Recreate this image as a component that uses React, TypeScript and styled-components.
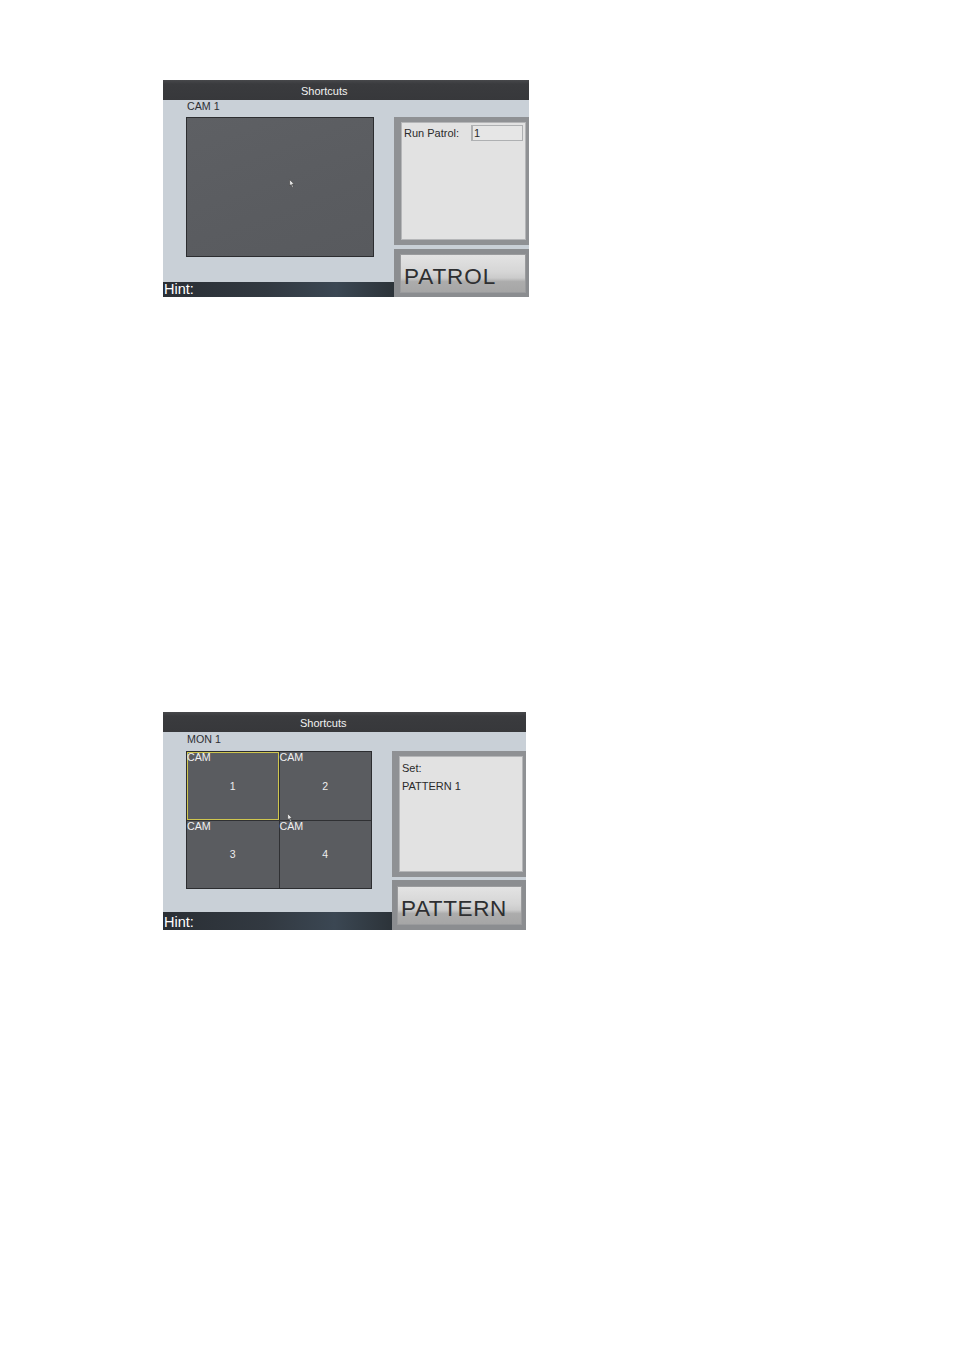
import React from 'react'
import styled, { createGlobalStyle } from 'styled-components'

const GlobalStyle = createGlobalStyle`
  html, body {
    margin: 0;
    padding: 0;
    background: #ffffff;
  }
  body {
    font-family: "Liberation Sans", Arial, sans-serif;
  }
`

const Page = styled.div`
  width: 954px;
  height: 1349px;
  padding-top: 80px;
  box-sizing: border-box;
  display: flex;
  flex-direction: column;
  gap: 415px;
`

const Screen = styled.div<{ $left: number; $width: number; $height: number }>`
  margin-left: 163px;
  width: ${({ $width }) => $width}px;
  height: ${({ $height }) => $height}px;
  display: grid;
  grid-template-columns: ${({ $left }) => $left}px 1fr;
  grid-template-rows: 20px 1fr;
  background: #c9d0d7;
  overflow: hidden;
`

const Header = styled.div<{ $pad: number }>`
  grid-column: 1 / 3;
  background: linear-gradient(#47484b 0%, #3a3b3e 20%, #37383b 100%);
  color: #f2f2f2;
  font-size: 11px;
  line-height: 22px;
  padding-left: ${({ $pad }) => $pad}px;
`

const LeftCol = styled.div`
  display: flex;
  flex-direction: column;
  min-height: 0;
`

const Label = styled.div<{ $h: number }>`
  height: ${({ $h }) => $h}px;
  padding-left: 24px;
  font-size: 10.7px;
  line-height: ${({ $h }) => $h - 4}px;
  color: #2d2f33;
`

const Viewport = styled.div<{ $h: number; $w: number }>`
  position: relative;
  margin-left: 23px;
  width: ${({ $w }) => $w}px;
  height: ${({ $h }) => $h}px;
  box-sizing: border-box;
  border: 1px solid #2c2d30;
  background: linear-gradient(160deg, #5e6064 0%, #5a5c60 60%, #585a5e 100%);
`

const QuadGrid = styled.div<{ $h: number; $w: number }>`
  position: relative;
  margin-left: 23px;
  width: ${({ $w }) => $w}px;
  height: ${({ $h }) => $h}px;
  box-sizing: border-box;
  border: 1px solid #2c2d30;
  background: #2f3033;
  display: grid;
  grid-template-columns: 1fr 1fr;
  grid-template-rows: 1fr 1fr;
  gap: 1px;
`

const Cell = styled.div<{ $active?: boolean }>`
  position: relative;
  background: #5a5c60;
  box-shadow: ${({ $active }) => ($active ? 'inset 0 0 0 1px #cfc64e' : 'none')};
  display: flex;
  align-items: center;
  justify-content: center;
  color: #eeeeee;
  font-size: 10.5px;
`

const CellTag = styled.span`
  position: absolute;
  left: 0;
  top: -1px;
  font-size: 10.7px;
  color: #f0f0f0;
`

const Cursor = styled.svg<{ $x: number; $y: number }>`
  position: absolute;
  left: ${({ $x }) => $x}px;
  top: ${({ $y }) => $y}px;
  width: 6px;
  height: 9px;
`

const Hint = styled.div<{ $h: number }>`
  margin-top: auto;
  height: ${({ $h }) => $h}px;
  box-sizing: border-box;
  padding: ${({ $h }) => $h - 15}px 0 0 1px;
  background: linear-gradient(90deg, #2a2f35 0%, #323941 45%, #3b4753 75%, #2c3339 100%);
  color: #ffffff;
  font-size: 14.5px;
  line-height: 15px;
`

const RightCol = styled.div<{ $top: number; $gap: number }>`
  display: flex;
  flex-direction: column;
  padding-top: ${({ $top }) => $top}px;
  gap: ${({ $gap }) => $gap}px;
  min-height: 0;
`

const PanelFrame = styled.div<{ $h: number }>`
  flex-shrink: 0;
  height: ${({ $h }) => $h}px;
  box-sizing: border-box;
  padding: 5px 3px 5px 7px;
  background: #8f9194;
  display: flex;
`

const PanelInner = styled.div`
  flex: 1;
  box-sizing: border-box;
  background: #e2e2e2;
  border: 1px solid #b5b6b8;
  padding: 2px 2px;
  font-size: 11px;
  color: #2a2a2a;
`

const FieldRow = styled.div`
  display: flex;
  align-items: center;
  gap: 12px;
`

const FieldInput = styled.div`
  width: 52px;
  height: 16px;
  box-sizing: border-box;
  border: 1px solid #aeb0b2;
  border-left-width: 2px;
  background: #e6e6e6;
  font-size: 11px;
  line-height: 15px;
  padding-left: 1px;
`

const TextLine = styled.div`
  line-height: 18px;
`

const ButtonFrame = styled.div<{ $pad: string }>`
  flex: 1;
  min-height: 0;
  box-sizing: border-box;
  padding: ${({ $pad }) => $pad};
  background: #8b8d90;
  display: flex;
`

const BigButton = styled.div<{ $spacing: number }>`
  flex: 1;
  min-height: 0;
  box-sizing: border-box;
  border: 1px solid #9a9b9d;
  background: linear-gradient(#e3e3e3 0%, #d6d6d6 45%, #cbcbcb 62%, #acacac 72%, #a6a6a6 100%);
  color: #2e2f31;
  font-size: 22.5px;
  letter-spacing: ${({ $spacing }) => $spacing}px;
  line-height: 30px;
  padding: 7px 0 0 3px;
  overflow: hidden;
  white-space: nowrap;
`

const Arrow: React.FC<{ x: number; y: number }> = ({ x, y }) => (
  <Cursor $x={x} $y={y} viewBox="0 0 6 9">
    <path d="M0.6 0.6 L0.6 7 L2 5.6 L3.3 8.4 L4.4 7.9 L3.1 5.2 L5.2 5.1 Z" fill="#e6e6e6" stroke="#3a3a3a" strokeWidth="0.6" />
  </Cursor>
)

const cams = [1, 2, 3, 4]

export default function App() {
  return (
    <>
      <GlobalStyle />
      <Page>
        <Screen $left={231} $width={366} $height={217}>
          <Header $pad={138}>Shortcuts</Header>
          <LeftCol>
            <Label $h={17}>CAM 1</Label>
            <Viewport $w={188} $h={140}>
              <Arrow x={102} y={61} />
            </Viewport>
            <Hint $h={15}>Hint:</Hint>
          </LeftCol>
          <RightCol $top={17} $gap={4}>
            <PanelFrame $h={128}>
              <PanelInner>
                <FieldRow>
                  <span>Run Patrol:</span>
                  <FieldInput>1</FieldInput>
                </FieldRow>
              </PanelInner>
            </PanelFrame>
            <ButtonFrame $pad="5px 3px 4px 6px">
              <BigButton $spacing={0.9}>PATROL</BigButton>
            </ButtonFrame>
          </RightCol>
        </Screen>

        <Screen $left={229} $width={363} $height={218}>
          <Header $pad={137}>Shortcuts</Header>
          <LeftCol>
            <Label $h={19}>MON 1</Label>
            <QuadGrid $w={186} $h={138}>
              {cams.map((n) => (
                <Cell key={n} $active={n === 1}>
                  <CellTag>CAM</CellTag>
                  {n}
                </Cell>
              ))}
              <Arrow x={100} y={61} />
            </QuadGrid>
            <Hint $h={18}>Hint:</Hint>
          </LeftCol>
          <RightCol $top={19} $gap={3}>
            <PanelFrame $h={126}>
              <PanelInner>
                <TextLine>Set:</TextLine>
                <TextLine>PATTERN 1</TextLine>
              </PanelInner>
            </PanelFrame>
            <ButtonFrame $pad="6px 4px 5px 5px">
              <BigButton $spacing={0.6}>PATTERN</BigButton>
            </ButtonFrame>
          </RightCol>
        </Screen>
      </Page>
    </>
  )
}
